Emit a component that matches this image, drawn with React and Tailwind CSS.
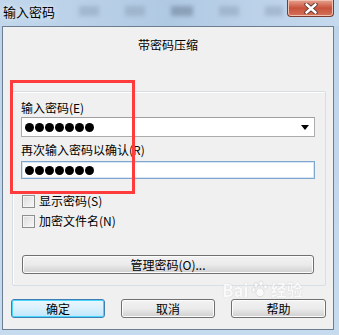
import { useState } from "react";

const FONT = { fontFamily: '"Noto Sans CJK SC", "Noto Sans", sans-serif' };

function Dots() {
  return (
    <div className="flex items-center gap-[1px] pl-[3px]">
      {Array.from({ length: 7 }).map((_, i) => (
        <span key={i} className="h-[9px] w-[9px] rounded-full bg-black" />
      ))}
    </div>
  );
}

function Check({ label }) {
  return (
    <label className="flex h-[16px] items-center gap-[4px] text-[12px] leading-[16px] text-black">
      <span className="h-[13px] w-[13px] border border-[#8f8f8f] bg-gradient-to-br from-[#dcdcdc] to-[#f8f8f8] shadow-[inset_0_0_0_1px_#f4f4f4]" />
      <span>{label}</span>
    </label>
  );
}

function Btn({ children, active, className = "" }) {
  return (
    <button
      type="button"
      className={`flex items-center justify-center rounded-[3px] border text-[12px] leading-none text-black ${
        active
          ? "border-[#3c7fb1] shadow-[inset_0_0_0_1px_#48d6ff] bg-gradient-to-b from-[#eaf6fd] via-[#d9f0fc] to-[#bee6fd]"
          : "border-[#707070] shadow-[inset_0_0_0_1px_#fcfcfc] bg-gradient-to-b from-[#f2f2f2] via-[#ebebeb] to-[#cfcfcf]"
      } ${className}`}
    >
      {children}
    </button>
  );
}

export default function App() {
  const [showPw] = useState(false);

  return (
    <div
      className="relative flex h-[335px] w-[339px] flex-col overflow-hidden bg-gradient-to-b from-[#bcd3ea] to-[#c7dbef]"
      style={FONT}
    >
      {/* Title bar */}
      <div className="relative flex h-[26px] items-start bg-gradient-to-r from-[#c2d7ec] via-[#b0c9e3] to-[#c6daee]">
        <span className="ml-[3px] mt-[4px] text-[13px] leading-[16px] text-black [text-shadow:0_0_6px_#ffffff]">
          输入密码
        </span>
        <div className="ml-[24px] mt-[6px] flex gap-[26px] opacity-40 blur-[2px]">
          <span className="h-[10px] w-[20px] bg-[#7f93aa]" />
          <span className="h-[10px] w-[20px] bg-[#7f93aa]" />
          <span className="h-[10px] w-[22px] bg-[#50627a]" />
          <span className="h-[10px] w-[20px] bg-[#7f93aa]" />
          <span className="h-[10px] w-[18px] bg-[#7f93aa]" />
        </div>
        <div className="absolute right-[5px] top-0 flex h-[17px] w-[47px] items-center justify-center rounded-b-[4px] border border-t-0 border-[#7a3a30] bg-gradient-to-b from-[#e6a290] via-[#c8523c] to-[#d3715a] shadow-[inset_0_0_0_1px_#f0c0b0]">
          <svg width="14" height="11" viewBox="0 0 14 11">
            <path
              d="M2.5 1.5 L11.5 9.5 M11.5 1.5 L2.5 9.5"
              stroke="#4a2a28"
              strokeWidth="4.2"
              strokeLinecap="round"
            />
            <path
              d="M2.5 1.5 L11.5 9.5 M11.5 1.5 L2.5 9.5"
              stroke="#ffffff"
              strokeWidth="2.6"
              strokeLinecap="round"
            />
          </svg>
        </div>
      </div>

      {/* Client area */}
      <div className="mx-[2px] flex h-[304px] w-[332px] flex-col border border-[#6c7d92] bg-[#f0f0f0]">
        <div className="mt-[10px] text-center text-[12px] leading-[16px] text-black">
          带密码压缩
        </div>

        {/* Group box */}
        <div className="ml-[9px] mt-[38px] flex h-[195px] w-[314px] flex-col rounded-[2px] border border-[#d5dfe5] px-[8px] pt-[8px] shadow-[inset_1px_1px_0_#ffffff]">
          <div className="text-[12px] leading-[16px] text-black">输入密码(E)</div>
          <div className="mt-[1px] flex h-[20px] w-[294px] items-center justify-between border border-[#acacac] border-t-[#a0a0a0] bg-white">
            <Dots />
            <svg width="8" height="5" viewBox="0 0 8 5" className="mr-[5px]">
              <path d="M0 0 H8 L4 5 Z" fill="#000" />
            </svg>
          </div>
          <div className="mt-[5px] text-[12px] leading-[16px] text-black">再次输入密码以确认(R)</div>
          <div className="mt-[3px] flex h-[18px] w-[294px] items-center border border-[#7fa6cf] shadow-[inset_0_0_0_1px_#d6e6f5] bg-white">
            {!showPw && <Dots />}
          </div>
          <div className="mt-[14px] ml-[1px] flex flex-col gap-[4px]">
            <Check label="显示密码(S)" />
            <Check label="加密文件名(N)" />
          </div>
          <Btn className="ml-[1px] mt-[26px] h-[19px] w-[292px]">管理密码(O)...</Btn>
        </div>

        {/* Buttons */}
        <div className="ml-[8px] mt-[13px] flex w-[315px] justify-between">
          <Btn active className="h-[19px] w-[94px]">确定</Btn>
          <Btn className="h-[19px] w-[94px]">取消</Btn>
          <Btn className="h-[19px] w-[95px]">帮助</Btn>
        </div>
      </div>

      {/* Red highlight */}
      <div className="absolute left-[10px] top-[80px] h-[114px] w-[125px] border-[3px] border-[#ff3b3b]" />

      {/* Watermark */}
      <div className="pointer-events-none absolute left-[222px] top-[280px] flex items-center gap-[2px] leading-none text-white opacity-70">
        <span className="text-[17px] font-bold [text-shadow:0_0_1px_#aaaaaa]">Bai</span>
        <svg width="18" height="18" viewBox="0 0 18 18">
          <g fill="#ffffff" stroke="#bbbbbb" strokeWidth="0.5">
            <ellipse cx="5" cy="5" rx="2" ry="2.6" />
            <ellipse cx="10" cy="3.5" rx="2" ry="2.6" />
            <ellipse cx="14.5" cy="7" rx="1.8" ry="2.3" />
            <ellipse cx="2.5" cy="10" rx="1.8" ry="2.3" />
            <path d="M9 8 C5 8 4 14 6 15.5 C8 17 10 17 12 15.5 C14 14 13 8 9 8 Z" />
          </g>
        </svg>
        <span className="text-[16px] font-bold [text-shadow:0_0_1px_#aaaaaa]">经验</span>
      </div>
    </div>
  );
}
